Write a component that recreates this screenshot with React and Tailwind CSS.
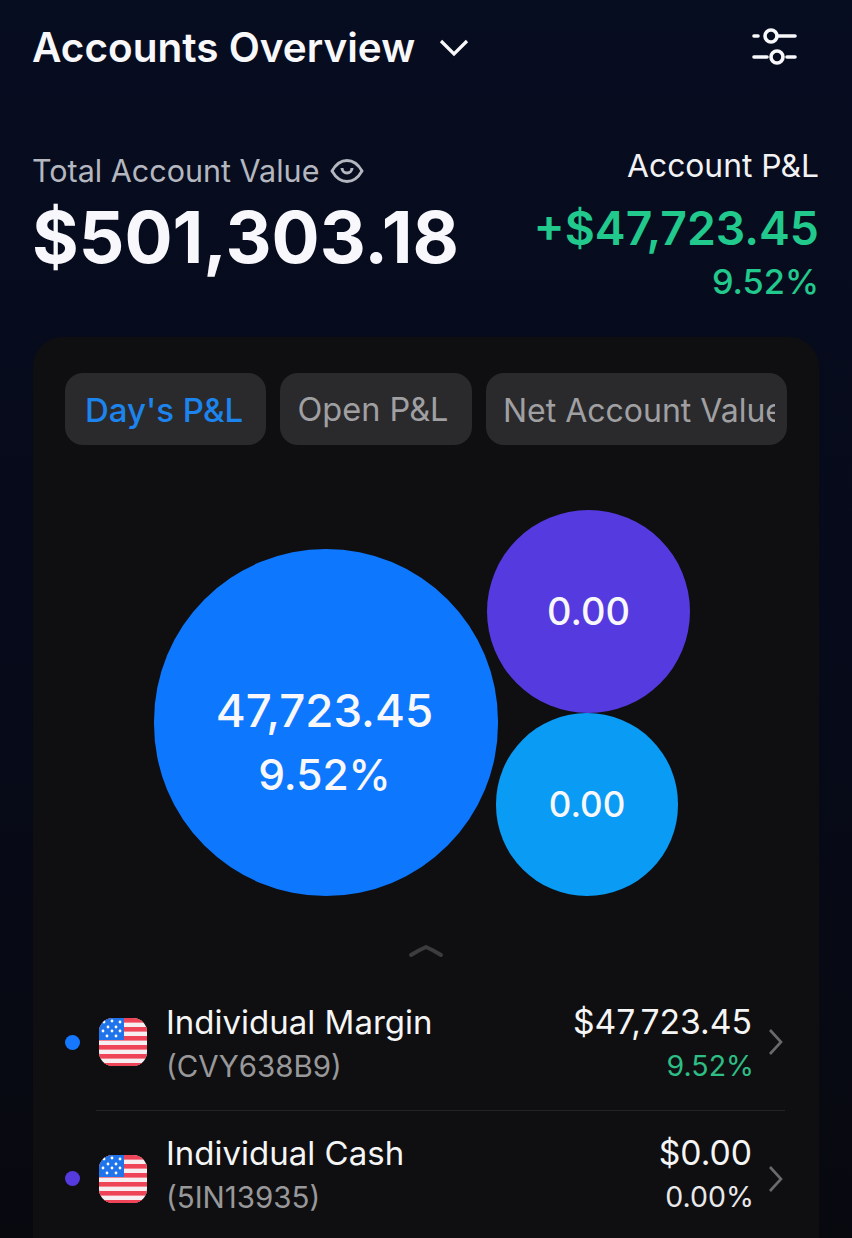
function Flag() {
  const stripes = [0, 1, 2, 3, 4, 5];
  const stars = [[5,4],[13,3],[21,4],[9,9],[17,9],[4,13],[13,13],[21,13],[8,18],[17,18]];
  return (
    <svg width="48" height="48" viewBox="0 0 48 48" className="shrink-0">
      <defs>
        <clipPath id="flagclip"><rect x="0" y="0" width="48" height="48" rx="14" /></clipPath>
      </defs>
      <g clipPath="url(#flagclip)">
        <rect width="48" height="48" fill="#f6eef0" />
        {stripes.map((i) => (
          <rect key={i} x="0" y={i * 9} width="48" height="4.6" fill="#ef4458" />
        ))}
        <rect x="0" y="0" width="25" height="22" fill="#1f74ec" />
        {stars.map(([x, y], i) => (
          <circle key={i} cx={x} cy={y} r="1.4" fill="#fff" />
        ))}
        <rect x="0" y="45" width="48" height="3" fill="#ef4458" />
      </g>
    </svg>
  );
}

function Row({ dot, name, code, value, pct, pctClass, first }) {
  const textShift = first ? "mt-[4px]" : "mb-[8px]";
  return (
    <div className={`flex items-center h-[132px] ml-[31px] mr-[3px] ${first ? "pb-[4px]" : "pt-[4px] border-t border-[#232325]"}`}>
      <div className={`w-[15px] h-[15px] rounded-full ml-[-31px] mr-[19px] shrink-0 ${dot}`} />
      <Flag />
      <div className={`ml-[19px] flex-1 ${textShift}`}>
        <div className="text-[33px] leading-[44px] text-[#f5f5f5]">{name}</div>
        <div className="text-[29.5px] leading-[44px] text-[#98989a]">{code}</div>
      </div>
      <div className={`text-right ${textShift}`}>
        <div className="text-[33.7px] leading-[44px] text-[#f5f5f5]">{value}</div>
        <div className={`text-[28.5px] leading-[44px] mr-[-2px] ${pctClass}`}>{pct}</div>
      </div>
      <svg width="18" height="28" viewBox="0 0 18 28" fill="none" className="ml-[15px]">
        <path d="M3 2l11 12L3 26" stroke="#6a6a6c" strokeWidth="2.6" />
      </svg>
    </div>
  );
}

function Tab({ children, active, className }) {
  return (
    <div className={`h-[72px] pt-[3px] rounded-[18px] bg-[#2a2a2d] flex items-center whitespace-nowrap ${active ? "text-[#1c84ec] font-medium" : "text-[#a0a0a3]"} ${className}`}>
      {children}
    </div>
  );
}

export default function App() {
  return (
    <div className="w-[852px] h-[1238px] overflow-hidden bg-gradient-to-b from-[#070d20] via-[#060a1a] to-[#08090f] font-['Inter','Liberation_Sans',sans-serif] text-white flex flex-col">
      <header className="shrink-0 flex items-center justify-between pl-[32px] pr-[55px] pt-[23px] h-[72px]">
        <div className="flex items-center">
          <h1 className="text-[40.5px] font-semibold leading-[48px] text-[#f8f8fa]">Accounts Overview</h1>
          <svg width="32" height="20" viewBox="0 0 32 20" fill="none" className="ml-[23px]">
            <path d="M3 3l13 13L29 3" stroke="#f8f8fa" strokeWidth="3.2" />
          </svg>
        </div>
        <svg width="46" height="40" viewBox="0 0 46 40" fill="none" stroke="#f8f8fa" strokeWidth="3.6" strokeLinecap="round">
          <path d="M3 8h4M27 8h17M3 29h13M36 29h8" />
          <circle cx="20" cy="8" r="6" />
          <circle cx="26" cy="29" r="6" />
        </svg>
      </header>

      <section className="shrink-0 flex justify-between pl-[32px] pr-[33px] mt-[71px] h-[194px]">
        <div>
          <div className="flex items-center h-[44px] mt-[6px]">
            <span className="text-[30.5px] text-[#b4b7bf]">Total Account Value</span>
            <svg width="34" height="26" viewBox="0 0 34 26" fill="none" className="ml-[11px]">
              <path d="M2 13C6 6 11 2.5 17 2.5S28 6 32 13c-4 7-9 10.500-15 10.500S6 20 2 13z" stroke="#b4b7bf" strokeWidth="2.800" />
              <path d="M12 10a5 5 0 0 0 10 0" stroke="#b4b7bf" strokeWidth="3" />
            </svg>
          </div>
          <div className="text-[71.4px] font-bold leading-[80px] mt-[4px] text-[#f8f8fc]">$501,303.18</div>
        </div>
        <div className="text-right pt-[1px]">
          <div className="text-[31.8px] leading-[44px] text-[#f2f2f4]">Account P&amp;L</div>
          <div className="text-[46.3px] font-semibold leading-[56px] mt-[12px] text-[#22c98d]">+$47,723.45</div>
          <div className="text-[34.3px] font-medium leading-[44px] mt-[4px] text-[#22c98d]">9.52%</div>
        </div>
      </section>

      <main className="mx-[33px] flex-1 rounded-t-[30px] bg-[#0f0f11]">
        <div className="flex gap-[14px] pl-[32px] pr-[32px] pt-[36px]">
          <Tab active className="w-[202px] pl-[20px] text-[33px]">Day's P&amp;L</Tab>
          <Tab className="w-[192px] pl-[17px] text-[32.5px]">Open P&amp;L</Tab>
          <Tab className="w-[302px] pl-[17px] text-[32px]">
            <span className="block w-[272px] overflow-hidden">Net Account Value</span>
          </Tab>
        </div>

        <div className="relative h-[472px] mt-[28px]">
          <div className="absolute left-[121px] top-[76px] w-[344px] h-[347px] pt-[40px] pr-[3px] rounded-full bg-[#0d77fd] flex flex-col items-center justify-center text-[#f8f8fa] font-medium">
            <div className="text-[45.7px] leading-[64px]">47,723.45</div>
            <div className="text-[42.5px] leading-[64px]">9.52%</div>
          </div>
          <div className="absolute left-[454px] top-[37px] w-[203px] h-[203px] rounded-full bg-[#553adf] flex items-center justify-center text-[38px] font-medium text-[#f8f8fa]">0.00</div>
          <div className="absolute left-[463px] top-[240px] w-[182px] h-[183px] rounded-full bg-[#0a9bf5] flex items-center justify-center text-[35px] font-medium text-[#f8f8fa]">0.00</div>
        </div>

        <div className="flex justify-center h-[24px] mt-[-2px]">
          <svg width="36" height="16" viewBox="0 0 36 16" fill="none">
            <path d="M3 12Q11 7 18 4Q25 7 33 12" stroke="#3c3c3e" strokeWidth="4" strokeLinecap="round" />
          </svg>
        </div>

        <div className="pl-[32px] pr-[31px] mt-[11px]">
          <Row first dot="bg-[#1677ff]" name="Individual Margin" code="(CVY638B9)" value="$47,723.45" pct="9.52%" pctClass="text-[#2dbd85]" />
          <Row dot="bg-[#553adf]" name="Individual Cash" code="(5IN13935)" value="$0.00" pct="0.00%" pctClass="text-[#e8e8ea]" />
        </div>
      </main>
    </div>
  );
}
